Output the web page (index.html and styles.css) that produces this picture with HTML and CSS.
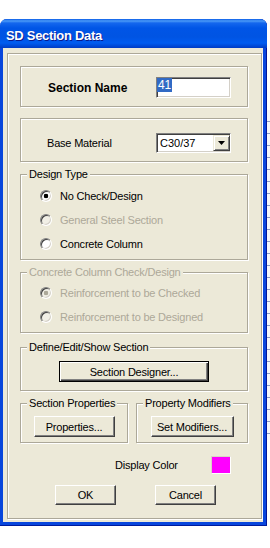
FILE: index.html
```html
<!DOCTYPE html>
<html lang="en">
<head>
  <meta charset="UTF-8" />
  <title>SD Section Data</title>
  <link rel="stylesheet" href="styles.css">
</head>
<body>
  <div class="desk">
    <div class="window">
      <div class="titlebar">SD Section Data</div>
      <div class="client">
        <div class="panel">
          <div class="frame name-frame">
            <span class="field-label strong">Section Name</span>
            <span class="textbox"><span class="selected">41</span></span>
          </div>
          <div class="frame material-frame">
            <span class="field-label">Base Material</span>
            <span class="combo">
              <span class="combo-value">C30/37</span>
              <span class="combo-button">
                <svg width="7" height="4" viewBox="0 0 7 4"><polygon points="0,0 7,0 3.5,4" fill="#000"/></svg>
              </span>
            </span>
          </div>
          <fieldset class="group design">
            <legend>Design Type</legend>
            <div class="option checked">No Check/Design</div>
            <div class="option disabled">General Steel Section</div>
            <div class="option">Concrete Column</div>
          </fieldset>
          <fieldset class="group check disabled">
            <legend>Concrete Column Check/Design</legend>
            <div class="option checked">Reinforcement to be Checked</div>
            <div class="option">Reinforcement to be Designed</div>
          </fieldset>
          <fieldset class="group define">
            <legend>Define/Edit/Show Section</legend>
            <div class="center">
              <button class="btn default designer">Section Designer...</button>
            </div>
          </fieldset>
          <div class="pair">
            <fieldset class="group props">
              <legend>Section Properties</legend>
              <div class="center">
                <button class="btn props-btn">Properties...</button>
              </div>
            </fieldset>
            <fieldset class="group mods">
              <legend>Property Modifiers</legend>
              <div class="center">
                <button class="btn mods-btn">Set Modifiers...</button>
              </div>
            </fieldset>
          </div>
          <div class="color-row">
            <span class="color-label">Display Color</span>
            <span class="swatch"></span>
          </div>
          <div class="actions">
            <button class="btn action">OK</button>
            <button class="btn action">Cancel</button>
          </div>
        </div>
      </div>
    </div>
    <div class="backdrop"></div>
  </div>
</body>
</html>
```

FILE: styles.css
```css
body {
  margin: 0;
  background: #fff;
  font-family: "Liberation Sans", Arial, sans-serif;
  font-size: 11px;
  letter-spacing: -0.2px;
  color: #000;
}
.desk {
  display: flex;
  align-items: flex-start;
}
.window {
  flex: none;
  width: 267px;
  margin-top: 19px;
  border-radius: 7px 7px 0 0;
  background: #0846dc;
  box-shadow: inset 0 -1px 0 #001c9c, inset -1px 0 0 #00169a;
}
.titlebar {
  height: 29px;
  box-sizing: border-box;
  padding: 9px 0 0 6px;
  border-radius: 7px 7px 0 0;
  background: linear-gradient(to bottom, #0a5ce8 0, #4b9af6 2px, #1467ee 4px, #0055e6 9px, #0054e3 18px, #005cf0 24px, #0049d6 27px, #003cc4 29px);
  color: #fff;
  font-size: 13px;
  font-weight: bold;
  line-height: 16px;
  letter-spacing: -0.3px;
  text-shadow: 1px 1px 0 #0a1a8c;
}
.client {
  margin: 0 4px 4px 3px;
  padding: 5px 0 3px 4px;
  background: #ece9d8;
}
.panel {
  width: 255px;
  box-sizing: border-box;
  padding: 12px 13px 13px 12px;
  border: 1px solid #aca899;
  box-shadow: inset 1px 1px 0 #fff, 1px 1px 0 #fff;
}
.frame {
  display: flex;
  align-items: center;
  border: 1px solid #aca899;
  box-shadow: inset 1px 1px 0 #fff, 1px 1px 0 #fff;
}
.name-frame {
  padding: 10px 0 8px 27px;
}
.material-frame {
  margin-top: 11px;
  padding: 14px 0 8px 26px;
}
.field-label {
  width: 108px;
}
.material-frame .field-label {
  width: 109px;
}
.strong {
  font-size: 12px;
  font-weight: bold;
  letter-spacing: 0;
}
.textbox, .combo {
  box-sizing: border-box;
  width: 75px;
  border: 1px solid;
  border-color: #808080 #fff #fff #808080;
  box-shadow: inset 1px 1px 0 #404040, inset -1px -1px 0 #d4d0c8;
  background: #fff;
}
.textbox {
  height: 21px;
}
.selected {
  display: inline-block;
  height: 14px;
  padding: 0 1px;
  background: #316ac5;
  color: #fff;
  font-size: 12px;
  line-height: 14px;
}
.combo {
  display: flex;
  align-items: center;
  height: 20px;
  padding-left: 3px;
}
.combo-value {
  letter-spacing: 0;
}
.combo-button {
  display: flex;
  align-items: center;
  justify-content: center;
  margin-left: auto;
  width: 17px;
  height: 16px;
  box-sizing: border-box;
  border: 1px solid;
  border-color: #ece9d8 #404040 #404040 #ece9d8;
  box-shadow: inset 1px 1px 0 #fff, inset -1px -1px 0 #808080;
  background: #ece9d8;
}
.group {
  margin: 6px 0 0;
  padding: 3px 6px;
  min-width: 0;
  border: 1px solid #aca899;
  box-shadow: inset 1px 1px 0 #fff, 1px 1px 0 #fff;
}
.group legend {
  padding: 0 2px;
  line-height: 13px;
  background: #ece9d8;
}
.check {
  padding-top: 2px;
}
.define {
  margin-top: 8px;
  padding: 7px 6px 8px;
}
.center {
  display: flex;
  justify-content: center;
}
.option {
  display: flex;
  align-items: center;
  height: 24px;
  padding-left: 13px;
}
.option::before {
  content: "";
  flex: none;
  width: 12px;
  height: 12px;
  box-sizing: border-box;
  margin-right: 8px;
  border-radius: 50%;
  border: 1px solid;
  border-color: #808080 #fff #fff #808080;
  box-shadow: inset 1px 1px 0 #404040, inset -1px -1px 0 #d4d0c8;
  background: #fff;
}
.option.checked::before {
  background: radial-gradient(circle, #000 0 2px, #fff 2.6px);
}
.disabled legend, .option.disabled, .disabled .option {
  color: #aca899;
}
.option.disabled::before, .disabled .option::before {
  background: #f1efe6;
}
.disabled .option.checked::before {
  background: radial-gradient(circle, #aca899 0 2px, #f1efe6 2.6px);
}
.btn {
  box-sizing: border-box;
  height: 21px;
  padding: 0;
  border: 1px solid;
  border-color: #fff #404040 #404040 #fff;
  box-shadow: inset -1px -1px 0 #808080;
  background: #ece9d8;
  color: #000;
  font-family: inherit;
  font-size: 11px;
  letter-spacing: -0.2px;
}
.btn.default {
  border-color: #000;
  box-shadow: inset 1px 1px 0 #fff, inset -1px -1px 0 #404040, inset -2px -2px 0 #808080;
}
.designer {
  width: 150px;
}
.pair {
  display: flex;
  gap: 8px;
  margin-top: 6px;
}
.pair .group {
  margin: 0;
  padding: 6px 6px 5px;
}
.props {
  width: 108px;
  box-sizing: border-box;
}
.mods {
  width: 112px;
  box-sizing: border-box;
}
.props-btn {
  width: 81px;
}
.mods-btn {
  width: 83px;
}
.color-row {
  display: flex;
  align-items: center;
  height: 18px;
  margin-top: 13px;
  padding-left: 95px;
}
.color-label {
  width: 96px;
}
.swatch {
  width: 20px;
  height: 18px;
  box-sizing: border-box;
  border: 1px solid;
  border-color: #d8d4c4 #fff #fff #d8d4c4;
  background: #f0f;
}
.actions {
  display: flex;
  gap: 39px;
  margin-top: 11px;
  padding-left: 35px;
}
.action {
  width: 61px;
  height: 20px;
}
.backdrop {
  flex: 1;
  height: 330px;
  margin-top: 110px;
  background: repeating-linear-gradient(to bottom, #f4f6fc 0 11px, #8a9bc8 11px 12px);
}
```
